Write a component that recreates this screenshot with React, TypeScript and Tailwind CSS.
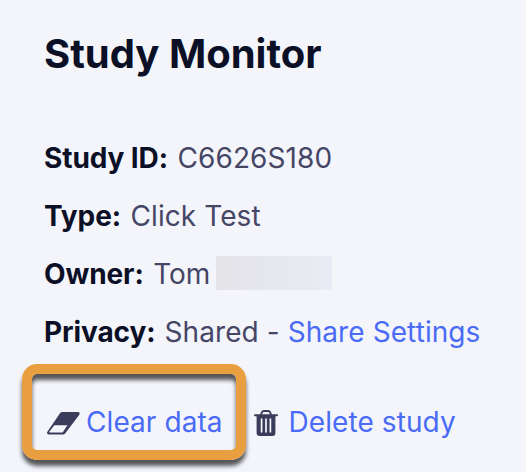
const details = [
  { label: 'Study ID:', value: 'C6626S180' },
  { label: 'Type:', value: 'Click Test' },
];

function EraserIcon() {
  return (
    <svg className="mt-[2px] shrink-0" width="33" height="23" viewBox="0 0 33 23">
      <path
        d="M15.500 0H31c1.500 0 2.200 1.500 1.300 2.700L18.300 21.200c-.6.8-1.400 1.300-2.400 1.300H1.700C.3 22.500-.4 21 .4 19.800L12.800 1.500C13.500.5 14.300 0 15.500 0Z"
        fill="#3b3c5b"
      />
      <path d="M7.400 13.200h13L16 20a1.300 1.300 0 0 1-1.100.6H2.900c-.6 0-.8-.5-.5-1Z" fill="#f4f5fb" />
    </svg>
  );
}

function TrashIcon() {
  return (
    <svg className="mt-[2px] shrink-0" width="24" height="26" viewBox="0 0 24 26">
      <path d="M6.800 4.800 8 2.200A2 2 0 0 1 9.800 1h4.400A2 2 0 0 1 16 2.200l1.200 2.600" fill="none" stroke="#3b3c5b" strokeWidth="1.900" />
      <rect y="4.200" width="24" height="2" rx="1" fill="#3b3c5b" />
      <path d="M2.600 5.500h18.800V23a3 3 0 0 1-3 3H5.600a3 3 0 0 1-3-3Z" fill="#3b3c5b" />
      <path d="M7.600 9.200v12.600M12 9.200v12.600M16.400 9.200v12.600" stroke="#f4f5fb" strokeWidth="1.700" strokeLinecap="round" />
    </svg>
  );
}

export default function App() {
  return (
    <main className="h-[472px] w-[526px] overflow-hidden bg-[#f4f5fb] font-['Inter',sans-serif] text-[#454666]">
      <h1 className="pl-11 pt-[29px] text-[40px] leading-[50px] font-bold text-[#0b1026]">Study Monitor</h1>
      <div className="mt-[50px] pl-11 text-[28px] leading-[58px] whitespace-nowrap">
        {details.map((item) => (
          <p key={item.label} className="flex gap-[9.5px]">
            <strong className="font-bold tracking-[-0.1px] text-[#0b1026]">{item.label}</strong>
            <span className="tracking-[0.08px]">{item.value}</span>
          </p>
        ))}
        <p className="flex items-center gap-[9.5px]">
          <strong className="font-bold tracking-[-0.1px] text-[#0b1026]">Owner:</strong>
          <span>Tom</span>
          <span className="-mt-[2px] -ml-1 h-[34px] w-[116px] bg-linear-to-r from-[#e3e3e8] to-[#ebebf5]" />
        </p>
        <p className="flex gap-[9px]">
          <strong className="font-bold tracking-[-0.1px] text-[#0b1026]">Privacy:</strong>
          <span className="tracking-[0.08px]">
            Shared - <a className="text-[#4a6bf5]">Share Settings</a>
          </span>
        </p>
      </div>
      <div className="mt-[3px] flex items-center pl-[22px] text-[28px] tracking-[0.08px]">
        {/* Highlight frame */}
        <div className="h-24 w-56 rounded-[15px] border-10 border-[#e99f40] shadow-[0_6px_4px_rgba(0,0,0,0.65),inset_0_6px_4px_rgba(0,0,0,0.65)]">
          <a className="flex h-full items-center gap-[6px] pl-[15px] pt-5 whitespace-nowrap text-[#4a6bf5]">
            <EraserIcon />
            Clear data
          </a>
        </div>
        <a className="ml-[7.5px] flex items-center gap-[11px] pt-5 whitespace-nowrap text-[#4a6bf5]">
          <TrashIcon />
          Delete study
        </a>
      </div>
    </main>
  );
}
